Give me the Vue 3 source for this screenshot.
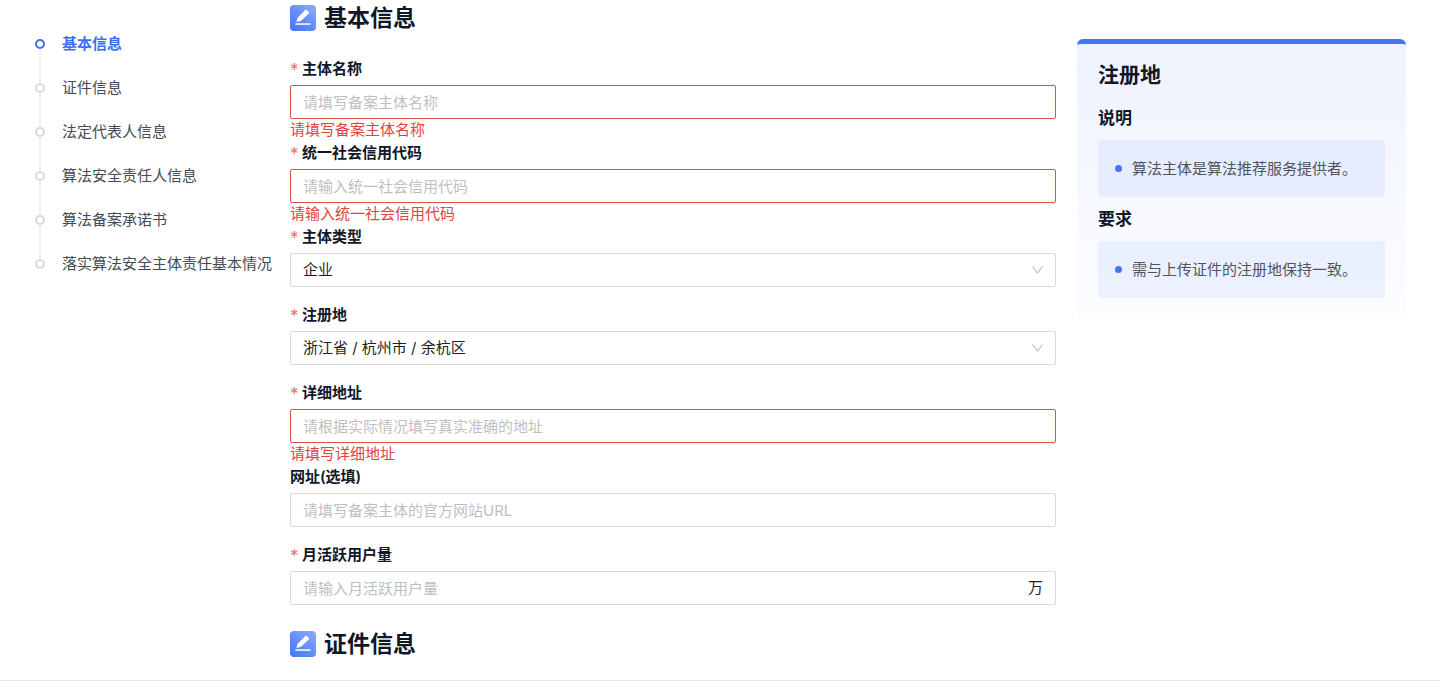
<script setup>
import { ref, reactive } from 'vue';

const steps = [
    '基本信息',
    '证件信息',
    '法定代表人信息',
    '算法安全责任人信息',
    '算法备案承诺书',
    '落实算法安全主体责任基本情况'
];
const activeStep = ref(0);

const fields = [
    { id: 'name', label: '主体名称', required: true, placeholder: '请填写备案主体名称', error: '请填写备案主体名称' },
    { id: 'code', label: '统一社会信用代码', required: true, placeholder: '请输入统一社会信用代码', error: '请输入统一社会信用代码' },
    { id: 'type', label: '主体类型', required: true, options: ['企业'] },
    { id: 'region', label: '注册地', required: true, options: ['浙江省 / 杭州市 / 余杭区'] },
    { id: 'address', label: '详细地址', required: true, placeholder: '请根据实际情况填写真实准确的地址', error: '请填写详细地址' },
    { id: 'website', label: '网址(选填)', placeholder: '请填写备案主体的官方网站URL' },
    { id: 'mau', label: '月活跃用户量', required: true, placeholder: '请输入月活跃用户量', suffix: '万' }
];

const form = reactive({
    name: '',
    code: '',
    type: '企业',
    region: '浙江省 / 杭州市 / 余杭区',
    address: '',
    website: '',
    mau: ''
});

const tips = [
    { title: '说明', items: ['算法主体是算法推荐服务提供者。'] },
    { title: '要求', items: ['需与上传证件的注册地保持一致。'] }
];

const hasError = (field) => Boolean(field.error) && !form[field.id];
</script>

<template>
    <div class="page">
        <!-- Step navigation -->
        <nav class="steps">
            <a v-for="(step, index) in steps"
                :key="step"
                href="#"
                class="step"
                :class="{ active: index === activeStep }"
                @click.prevent="activeStep = index"
            >
                <span class="step-rail"><span class="step-dot"></span></span>
                <span>{{ step }}</span>
            </a>
        </nav>

        <!-- Form -->
        <main class="content">
            <svg class="defs" width="0" height="0" aria-hidden="true">
                <defs>
                    <linearGradient id="icon-bg" x1="1" y1="0" x2="0.2" y2="1">
                        <stop offset="0" stop-color="#8fabff" />
                        <stop offset="1" stop-color="#4678f8" />
                    </linearGradient>
                    <symbol id="icon-edit" viewBox="0 0 26 26">
                        <rect width="26" height="26" rx="4" fill="url(#icon-bg)" />
                        <path fill="#fff" d="M6.4 16.9 7.5 13 15.3 4.9Q16 4.2 16.7 4.9L18.9 6.9Q19.6 7.6 18.9 8.3L11.2 15.7Z" />
                        <path fill="#fff" d="M5.3 18.3H20.5V19.8H5.3Z" />
                    </symbol>
                </defs>
            </svg>

            <form class="section" @submit.prevent>
                <h2 class="section-title">
                    <svg class="section-icon" aria-hidden="true"><use href="#icon-edit" /></svg>
                    基本信息
                </h2>
                <div v-for="field in fields" :key="field.id" class="field" :class="{ invalid: hasError(field) }">
                    <label class="field-label" :for="field.id">
                        <span v-if="field.required" class="required">*</span>{{ field.label }}
                    </label>
                    <div class="control">
                        <template v-if="field.options">
                            <select :id="field.id" v-model="form[field.id]">
                                <option v-for="option in field.options" :key="option">{{ option }}</option>
                            </select>
                            <svg class="arrow" viewBox="0 0 12 12" aria-hidden="true">
                                <path d="M1.5 2.5 6.5 9 11.5 2.5" fill="none" stroke="#bfbfbf" stroke-width="1.2" />
                            </svg>
                        </template>
                        <input v-else :id="field.id" v-model="form[field.id]" type="text" :placeholder="field.placeholder" />
                        <span v-if="field.suffix" class="suffix">{{ field.suffix }}</span>
                    </div>
                    <p v-if="hasError(field)" class="error">{{ field.error }}</p>
                </div>
            </form>

            <h2 class="section-title">
                <svg class="section-icon" aria-hidden="true"><use href="#icon-edit" /></svg>
                证件信息
            </h2>
        </main>

        <!-- Help panel -->
        <aside class="help">
            <h3 class="help-title">注册地</h3>
            <section v-for="tip in tips" :key="tip.title">
                <h4 class="help-subtitle">{{ tip.title }}</h4>
                <ul class="help-list">
                    <li v-for="item in tip.items" :key="item">{{ item }}</li>
                </ul>
            </section>
        </aside>
    </div>
</template>

<style>
body {
    margin: 0;
    background: #fff;
}
</style>

<style scoped>
.page {
    display: grid;
    grid-template-columns: 255px minmax(0, 1fr) 350px;
    align-items: start;
    padding: 0 34px 18px 35px;
    border-bottom: 1px solid #e8e8e8;
    font-family: Inter, "Noto Sans CJK SC", sans-serif;
    font-size: 15px;
    line-height: 22px;
    color: #0f1728;
}

h2,
h3,
h4,
p,
ul {
    margin: 0;
    padding: 0;
}

/* Steps */
.steps {
    padding-top: 22px;
}

.step {
    display: flex;
    align-items: center;
    gap: 17px;
    height: 44px;
    color: #444b55;
    text-decoration: none;
    white-space: nowrap;
}

.step.active {
    color: #3b70f5;
    font-weight: 600;
}

.step-rail {
    display: flex;
    flex-direction: column;
    align-items: center;
    width: 10px;
    height: 100%;
}

.step-rail::before,
.step-rail::after {
    content: "";
    flex: 1;
    width: 2px;
    background: #f0f0f0;
}

.step:first-child .step-rail::before,
.step:last-child .step-rail::after {
    background: none;
}

.step-dot {
    box-sizing: border-box;
    width: 10px;
    height: 10px;
    border: 2px solid #d9d9d9;
    border-radius: 50%;
}

.step.active .step-dot {
    border-color: #3b70f5;
}

/* Form */
.defs {
    position: absolute;
}

.section {
    padding-bottom: 3px;
}

.section-title {
    display: flex;
    align-items: center;
    gap: 8px;
    font-size: 23px;
    font-weight: 600;
    line-height: 36px;
}

.section .section-title {
    margin-bottom: 23px;
}

.section-icon {
    width: 26px;
    height: 26px;
}

.field {
    margin-bottom: 18px;
}

.field.invalid {
    margin-bottom: 2px;
}

.field-label {
    display: flex;
    gap: 4px;
    padding-bottom: 6px;
    font-weight: 600;
    line-height: 20px;
}

.required {
    width: 8px;
    color: #f26d6d;
    font-family: Inter, sans-serif;
    font-size: 17px;
    font-weight: 400;
    line-height: 22px;
    height: 20px;
}

.control {
    display: flex;
    align-items: center;
    box-sizing: border-box;
    height: 34px;
    padding: 0 12px;
    border: 1px solid #d9d9d9;
    border-radius: 2px;
    background: #fff;
    color: #1f1f1f;
}

.invalid .control {
    border-color: #e0504c;
}

.control input,
.control select {
    flex: 1;
    min-width: 0;
    height: 100%;
    margin: 0;
    padding: 0;
    border: 0;
    outline: none;
    background: none;
    color: inherit;
    font: inherit;
    appearance: none;
}

.control input::placeholder {
    color: #bfbfbf;
    opacity: 1;
}

.arrow {
    width: 12px;
    height: 12px;
    pointer-events: none;
}

.error {
    color: #e0443e;
}

/* Help panel */
.help {
    margin: 39px 0 0 21px;
    padding: 17px 21px 22px;
    border-top: 5px solid #4375f5;
    border-radius: 6px;
    background: linear-gradient(180deg, #eff3ff, #fcfdff);
}

.help-title {
    padding-bottom: 7px;
    font-size: 21px;
    font-weight: 600;
    line-height: 28px;
}

.help-subtitle {
    padding: 6px 0;
    font-size: 17px;
    font-weight: 600;
    line-height: 32px;
}

.help-list {
    padding: 18px 17px;
    border-radius: 4px;
    background: rgba(67, 117, 245, 0.08);
    color: #50555e;
    line-height: 21px;
    list-style: none;
}

.help-list li {
    display: flex;
    align-items: center;
    gap: 10px;
}

.help-list li::before {
    content: "";
    width: 7px;
    height: 7px;
    border-radius: 50%;
    background: #4375f5;
}
</style>
